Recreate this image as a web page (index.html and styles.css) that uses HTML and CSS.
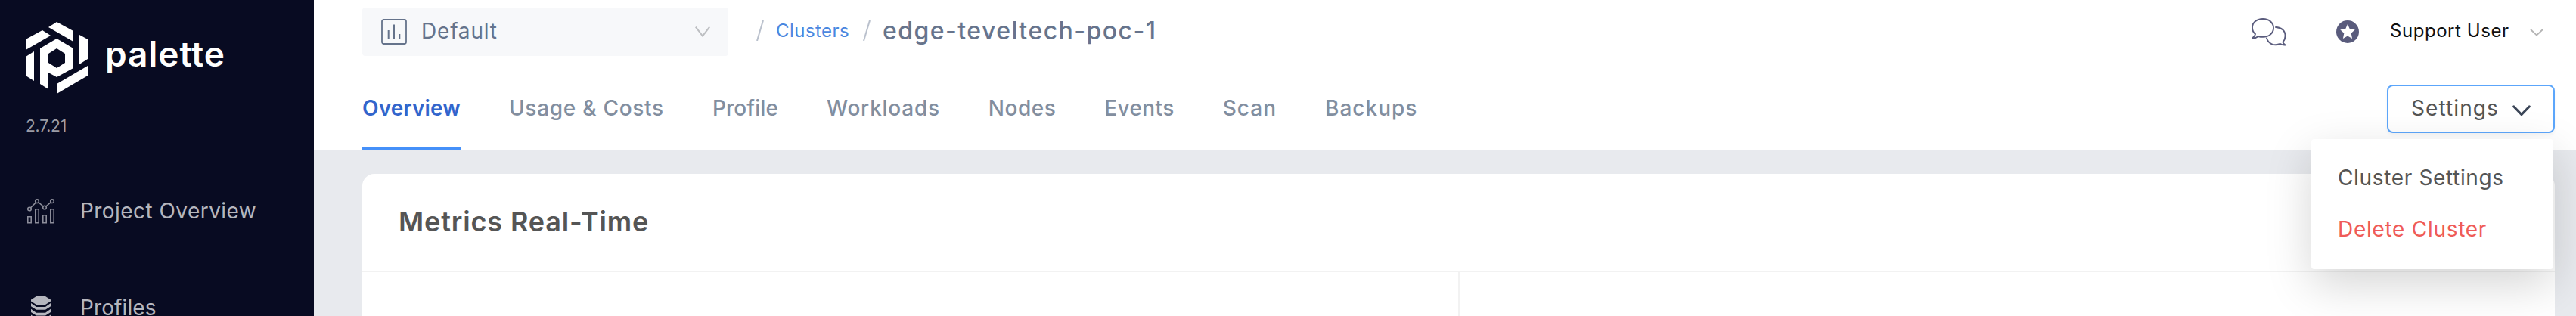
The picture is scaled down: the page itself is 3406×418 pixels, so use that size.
FILE: index.html
```html
<!DOCTYPE html>
<html lang="en">
<head>
<meta charset="utf-8">
<title>Palette</title>
<link rel="stylesheet" href="styles.css">
</head>
<body>
<div class="app">
  <aside class="sidebar">
    <div class="brand">
      <svg class="brand-mark" viewBox="0 0 82 95" fill="#fff">
        <path d="M30 7 41 0 63 12V26Z"/>
        <path d="M0 23 22 11 33 18 0 37Z"/>
        <path d="M71 17 82 23V49L71 56Z"/>
        <path d="M0 46 11 39V78L0 71Z"/>
        <path d="M41 82 82 58V71L41 95Z"/>
        <path fill-rule="evenodd" d="M41 22 63 35V61L41 73 30 67V89L19 82V35ZM41 35 30 42V54L41 61 52 54V42Z"/>
      </svg>
      <span class="brand-name">palette</span>
    </div>
    <div class="version">2.7.21</div>
    <nav class="side-nav">
      <a class="side-item">
        <svg class="icon-chart" viewBox="0 0 36 33" fill="none" stroke="#8b8c99" stroke-width="1.6">
          <path d="M.8 23.8h4.4v7.9H.8zM10.8 13.800h4.400v17.900h-4.400zM20.800 21.800h4.400v9.900h-4.400zM30.800 13.800h4.400v17.900h-4.400z"/>
          <circle cx="3" cy="13.500" r="2.300"/><circle cx="13" cy="3.200" r="2.300"/><circle cx="23" cy="11.500" r="2.300"/><circle cx="33" cy="3.200" r="2.300"/>
          <path d="M4.600 11.800 11.400 4.900M14.800 4.700l6.400 5.300M24.800 10l6.400-5.300"/>
        </svg>
        <span class="side-label side-label-overview">Project Overview</span>
      </a>
      <a class="side-item">
        <svg class="icon-stack" viewBox="0 0 26 36" fill="#b5b6be">
          <path d="M7 0h12l7 4.500v2L19 11H7L0 6.500v-2Z"/>
          <path d="M0 9l7 5h12l7-5v4.200l-7 4.500H7l-7-4.500Z"/>
          <path d="M0 16.700l7 5h12l7-5v4.200l-7 4.500H7l-7-4.500Z"/>
          <path d="M0 24.400l7 5h12l7-5v4.200l-7 4.500H7l-7-4.500Z"/>
        </svg>
        <span class="side-label">Profiles</span>
      </a>
    </nav>
  </aside>
  <div class="main">
    <header class="header">
      <div class="topbar">
        <div class="scope">
          <svg class="icon-scope" viewBox="0 0 34 34" fill="none" stroke="#65738b" stroke-width="1.800">
            <rect x="1" y="1" width="32" height="32" rx="2.500"/>
            <path d="M9.700 15v11.500M17 7.500v19M24.300 20v6.500" stroke-width="2"/>
          </svg>
          <span class="scope-name">Default</span>
          <svg class="icon-caret" viewBox="0 0 20 14" fill="none" stroke="#bcbec1" stroke-width="2"><path d="M.8.600 10 12.600 19.200.600"/></svg>
        </div>
        <svg class="slash" viewBox="0 0 10 27"><path d="M1 27 9 0" stroke="#b9c0cc" stroke-width="2"/></svg>
        <a class="crumb">Clusters</a>
        <svg class="slash slash-2" viewBox="0 0 10 27"><path d="M1 27 9 0" stroke="#b9c0cc" stroke-width="2"/></svg>
        <span class="crumb-current">edge-teveltech-poc-1</span>
        <div class="user">
          <svg class="icon-chat" viewBox="0 0 46 37" fill="none" stroke="#595b7c" stroke-width="1.900" stroke-linejoin="round" stroke-linecap="round">
            <path d="M15 1C6.500 1 1 6 1 12.600c0 3.600 1.500 6.400 4 8.500-.3 2-1.600 3.600-4 5.400 3.300.1 6-.9 8-2.500 2 .7 4 .9 6 .9 8.500 0 14-5.400 14-12S23.500 1 15 1Z"/>
            <path d="M32 12c7.500.4 12.600 4.600 12.600 11.500 0 3.500-1.200 6-3.300 8.100.4 1.400 1.400 2.700 3.300 4-3 .2-5-.4-6.600-1.600-8.500 3-15.500.2-18-7.500"/>
          </svg>
          <svg class="icon-star" viewBox="0 0 30 30"><circle cx="15" cy="15" r="15" fill="#595b7c"/><path fill="#fff" d="M15 5l2.900 6.500 6.900.8-5.100 4.800 1.400 7L15 20.600l-6.100 3.500 1.400-7-5.100-4.800 6.900-.8Z"/></svg>
          <span class="user-name">Support User</span>
          <svg class="icon-caret-sm" viewBox="0 0 18 10" fill="none" stroke="#b4b4b4" stroke-width="1.800"><path d="M1 1 9 8.600 17 1"/></svg>
        </div>
      </div>
      <div class="tabbar">
        <nav class="tabs">
          <a class="tab tab-active">Overview</a>
          <a class="tab tab-usage">Usage &amp; Costs</a>
          <a class="tab tab-profile">Profile</a>
          <a class="tab tab-workloads">Workloads</a>
          <a class="tab tab-nodes">Nodes</a>
          <a class="tab tab-events">Events</a>
          <a class="tab tab-scan">Scan</a>
          <a class="tab tab-backups">Backups</a>
        </nav>
        <div class="settings">
          <button class="settings-btn"><span class="settings-label">Settings</span>
            <svg class="icon-down" viewBox="0 0 24 15" fill="none" stroke="#3c4658" stroke-width="3.200" stroke-linecap="round"><path d="M1.800 2 12 12.500 22.200 2"/></svg>
          </button>
          <div class="menu">
            <a class="menu-item">Cluster Settings</a>
            <a class="menu-item menu-danger">Delete Cluster</a>
          </div>
        </div>
      </div>
    </header>
    <section class="card">
      <h2 class="card-title">Metrics Real-Time</h2>
      <div class="card-body"><div class="panel"></div><div class="panel"></div></div>
    </section>
  </div>
</div>
</body>
</html>
```
FILE: styles.css
```css
* { box-sizing: border-box; }
body { margin: 0; font-family: Inter, "Open Sans", sans-serif; font-size: 28px; line-height: 40px; color: #555; }
svg { display: block; flex: none; }
span, a { white-space: nowrap; }
.app { display: flex; width: 3406px; height: 418px; overflow: hidden; }
.sidebar { flex: none; width: 415px; height: 418px; background: #080b22; padding: 29px 34px 0; overflow: hidden; }
.brand { display: flex; align-items: flex-start; gap: 23px; height: 95px; }
.brand-mark { width: 82px; height: 95px; }
.brand-name { color: #fff; font-size: 46px; font-weight: 600; line-height: 60px; margin-top: 12px; letter-spacing: .9px; }
.version { margin-top: 25px; height: 36px; line-height: 36px; font-size: 21px; color: #9b9ca6; letter-spacing: -.2px; }
.side-nav { margin-top: 74px; color: #b5b6be; }
.side-item { display: flex; align-items: flex-start; height: 128px; }
.side-label { margin-left: 34px; letter-spacing: .1px; }
.side-label-overview { letter-spacing: .45px; }
.icon-chart { width: 36px; height: 33px; margin: 4px 0 0 2px; }
.icon-stack { width: 26px; height: 36px; margin: 5px 5px 0 7px; }
.main { flex: 1; min-width: 0; background: #e8eaee; }
.header { height: 198px; background: #fff; padding-left: 64px; }
.topbar { display: flex; align-items: flex-start; height: 112px; padding-top: 10px; }
.scope { display: flex; align-items: center; width: 484px; height: 64px; background: #f7f8fa; border-radius: 4px; color: #65738b; padding: 0 24px 0 25px; }
.icon-scope { width: 34px; height: 34px; }
.scope-name { margin: -2px auto 0 19px; letter-spacing: .8px; }
.icon-caret { width: 20px; height: 14px; }
.slash { width: 10px; height: 27px; margin: 17px 16px 0 37px; }
.slash-2 { margin: 17px 16px 0 0; }
.crumb { color: #4a87e0; font-size: 24px; margin-top: 11px; width: 115px; letter-spacing: .45px; }
.crumb-current { font-size: 32px; font-weight: 500; color: #67748c; margin-top: 11px; letter-spacing: 1.45px; }
.user { display: flex; align-items: flex-start; margin: 14px 43px 0 auto; }
.icon-chat { width: 46px; height: 37px; }
.icon-star { width: 30px; height: 30px; margin: 3px 0 0 66px; }
.user-name { font-size: 24px; color: #111; margin: -3px 0 0 41px; width: 185px; letter-spacing: .55px; }
.icon-caret-sm { width: 18px; height: 10px; margin-top: 14px; }
.tabbar { display: flex; justify-content: space-between; height: 86px; }
.tabs { display: flex; gap: 64px; color: #828e9f; font-weight: 500; }
.tab { height: 86px; padding-top: 11px; }
.tab-active { color: #3265cc; font-weight: 600; border-bottom: 4px solid #4590f9; letter-spacing: .12px; }
.tab-usage { letter-spacing: .72px; }
.tab-profile { letter-spacing: .1px; }
.tab-workloads { letter-spacing: .75px; }
.tab-nodes { letter-spacing: .5px; }
.tab-events { letter-spacing: .4px; }
.tab-scan { letter-spacing: 1px; }
.tab-backups { letter-spacing: 1px; }
.settings { position: relative; margin-right: 28px; width: 222px; height: 64px; }
.settings-btn { display: flex; width: 222px; height: 64px; padding: 9px 30px 0; border: 2px solid #5ca6fb; border-radius: 8px; background: #fff; box-shadow: 0 3px 4px rgba(0,0,0,.04); font: inherit; color: #555; justify-content: space-between; }
.settings-label { letter-spacing: 1.1px; }
.icon-down { width: 24px; height: 15px; margin-top: 16px; }
.menu { position: absolute; right: 2px; top: 72px; width: 320px; height: 172px; background: #fff; border-radius: 4px; box-shadow: 0 20px 60px rgba(0,0,0,.17); padding: 31px 35px; }
.menu-item { display: block; height: 68px; letter-spacing: .65px; }
.menu-danger { color: #ef5b57; letter-spacing: .72px; }
.card { margin: 32px 28px 0 64px; height: 300px; background: #fff; border-radius: 16px 16px 0 0; }
.card-title { margin: 0; height: 130px; border-bottom: 2px solid #f2f2f2; font-size: 36px; font-weight: 600; line-height: 50px; padding: 38px 0 0 48px; letter-spacing: .85px; }
.card-body { display: flex; height: 170px; }
.panel { flex: none; width: 1451px; border-right: 2px solid #f2f2f2; }
.panel + .panel { flex: 1; width: auto; min-width: 0; border: 0; }
```
